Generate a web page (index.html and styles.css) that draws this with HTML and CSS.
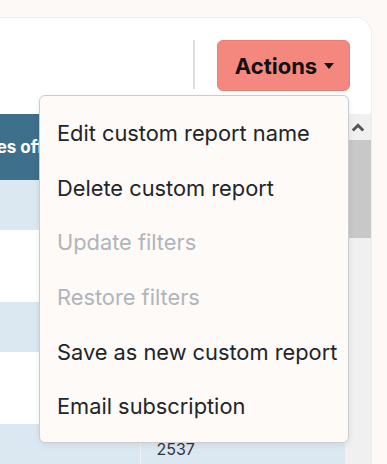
FILE: index.html
```html
<!DOCTYPE html>
<html lang="en">
<head>
    <meta charset="UTF-8">
    <meta name="viewport" content="width=device-width, initial-scale=1.0">
    <title>Custom report</title>
    <link rel="stylesheet" href="styles.css">
</head>
<body>
    <div class="page">
        <div class="card">
            <div class="toolbar">
                <div class="divider"></div>
                <div class="actions">
                    <button type="button" class="btn-actions">Actions <span class="caret"></span></button>
                    <ul class="dropdown-menu">
                        <li class="dropdown-item">Edit custom report name</li>
                        <li class="dropdown-item">Delete custom report</li>
                        <li class="dropdown-item disabled">Update filters</li>
                        <li class="dropdown-item disabled">Restore filters</li>
                        <li class="dropdown-item">Save as new custom report</li>
                        <li class="dropdown-item">Email subscription</li>
                    </ul>
                </div>
            </div>
            <div class="table-wrap">
                <table class="report-table">
                    <thead>
                        <tr>
                            <th>Minutes offered</th>
                            <th></th>
                        </tr>
                    </thead>
                    <tbody>
                        <tr class="row-short"><td></td><td></td></tr>
                        <tr class="row-tall"><td></td><td></td></tr>
                        <tr class="row-short"><td></td><td></td></tr>
                        <tr class="row-tall"><td></td><td></td></tr>
                        <tr class="row-short"><td></td><td>2537</td></tr>
                    </tbody>
                </table>
                <div class="scrollbar">
                    <div class="scroll-arrow">
                        <svg width="14" height="9" viewBox="0 0 14 9"><polyline points="1.8,7.5 7,2.3 12.2,7.5" fill="none" stroke="#555" stroke-width="3"/></svg>
                    </div>
                    <div class="scroll-thumb"></div>
                </div>
            </div>
        </div>
    </div>
</body>
</html>
```

FILE: styles.css
```css
body {
    margin: 0;
    background-color: #fdf9f6;
    font-family: Inter, "Open Sans", sans-serif;
    overflow: hidden;
}
.page {
    padding: 17px 15px 0 0;
}
.card {
    margin-left: -60px;
    background-color: #ffffff;
    border: 1px solid #eeeeee;
    border-bottom: none;
    border-radius: 0 16px 0 0;
    height: 480px;
}
.toolbar {
    display: flex;
    justify-content: flex-end;
    align-items: flex-start;
    padding: 22px 21px 23px 0;
}
.divider {
    width: 2px;
    height: 49px;
    background-color: #dddddd;
    margin-right: 22px;
}
.actions {
    position: relative;
}
.btn-actions {
    display: flex;
    align-items: center;
    gap: 7px;
    width: 133px;
    height: 51px;
    justify-content: center;
    padding: 0 0 0 2px;
    border: 1px solid #ec7e74;
    border-radius: 6px;
    background-color: #f5887e;
    color: #111111;
    font-family: Inter, sans-serif;
    font-size: 22px;
    font-weight: 700;
    cursor: pointer;
}
.caret {
    width: 0;
    height: 0;
    border-top: 6px solid #111111;
    border-left: 5.5px solid transparent;
    border-right: 5.5px solid transparent;
}
.dropdown-menu {
    position: absolute;
    top: calc(100% + 4px);
    right: 1px;
    width: 308px;
    margin: 0;
    padding: 10px 0 8px;
    list-style: none;
    background-color: #fefaf7;
    border: 1px solid #cccccc;
    border-radius: 6px;
    box-shadow: 0 2px 6px rgba(0, 0, 0, 0.08);
    z-index: 10;
}
.dropdown-item {
    padding: 12.3px 17px;
    line-height: 30px;
    font-size: 21.8px;
    color: #212529;
    white-space: nowrap;
}
.dropdown-item.disabled {
    color: #b0b5bb;
}
.table-wrap {
    display: flex;
}
.report-table {
    flex: 1;
    border-collapse: collapse;
    font-size: 16px;
    color: #333333;
}
.report-table th {
    height: 66px;
    padding: 0 12px;
    background-color: #3e6f8b;
    color: #ffffff;
    font-size: 17px;
    font-weight: 700;
    text-align: left;
    white-space: nowrap;
}
.report-table th:first-child {
    width: 179px;
    padding-left: 8px;
}
.report-table td {
    padding: 0 16px;
    vertical-align: middle;
}
.report-table td + td {
    border-left: 1px solid #eef3f7;
}
.report-table tbody tr:nth-child(odd) {
    background-color: #dce8f1;
}
.row-short {
    height: 50px;
}
.row-tall {
    height: 72px;
}
.scrollbar {
    width: 26px;
    background-color: #f0f0f0;
}
.scroll-arrow {
    height: 26px;
    display: flex;
    align-items: center;
    justify-content: center;
}
.scroll-thumb {
    height: 98px;
    background-color: #c8c8c8;
}
```
